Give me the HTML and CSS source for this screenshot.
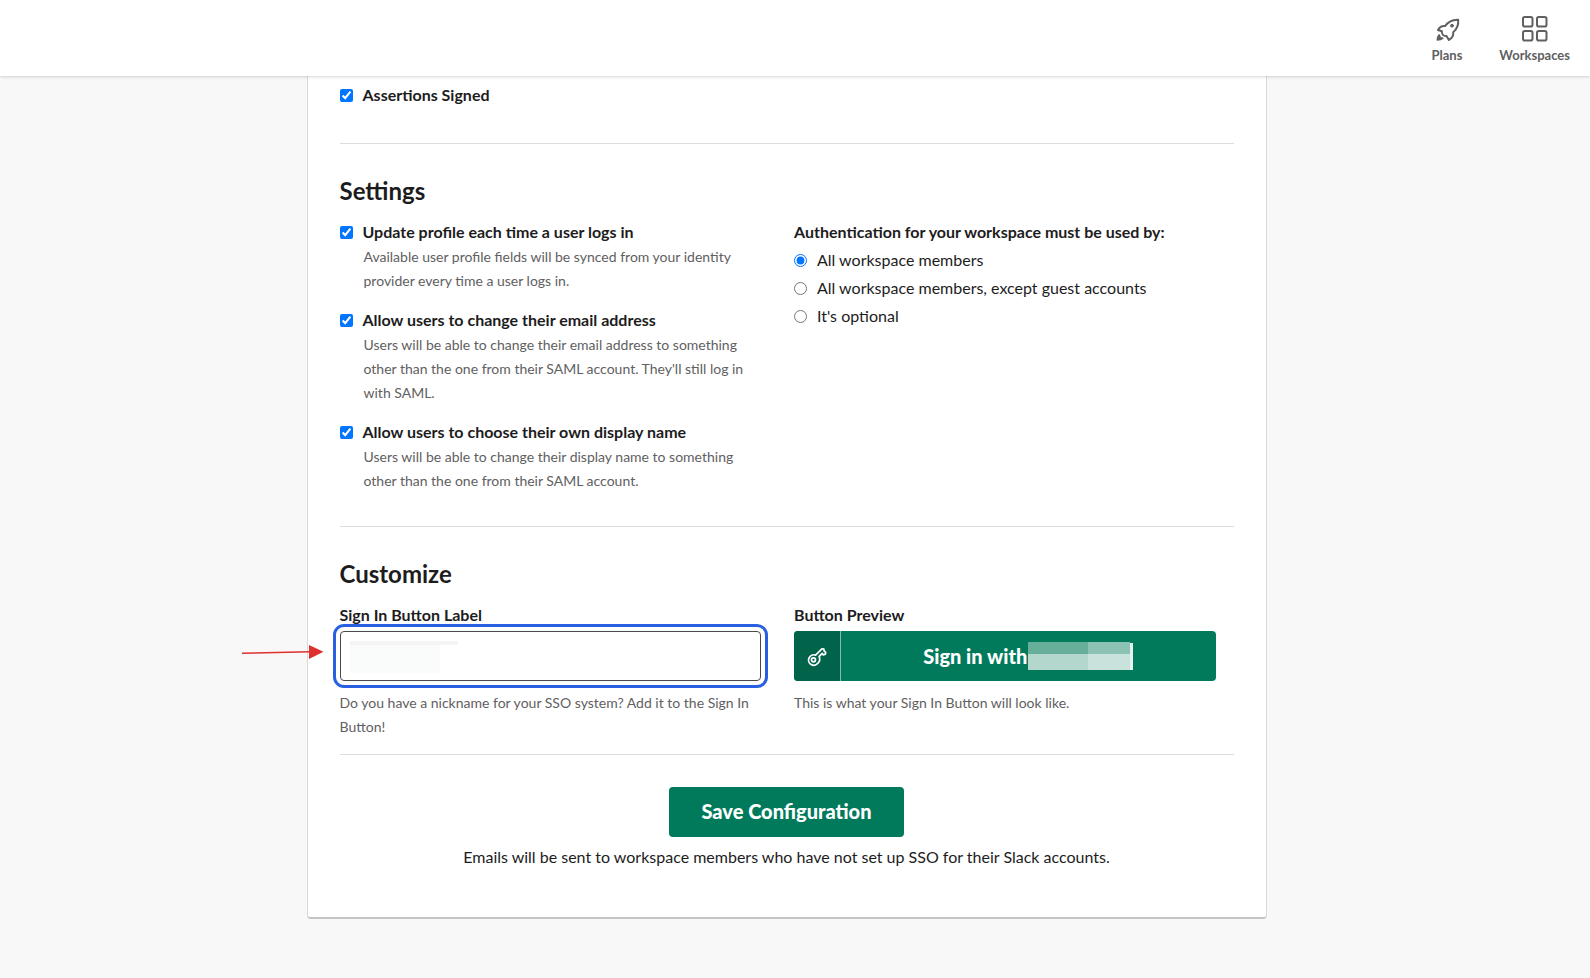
FILE: index.html
```html
<!DOCTYPE html>
<html lang="en">
<head>
<meta charset="utf-8">
<title>SAML Authentication</title>
<link rel="stylesheet" href="styles.css">
</head>
<body>
<header class="topbar">
  <nav class="topnav">
    <a class="navlink" href="#plans">
      <svg class="navicon" viewBox="0 0 28 28" fill="none" stroke="#616061" stroke-width="2" stroke-linejoin="round" stroke-linecap="round">
        <path d="M25.200 4.700c-5.700-.3-9.900 1.800-13.200 6.400-3-.3-5.400 1-7 3.900l3.900 1.300c-.4 1.500 0 2.600 1 3.600s2.200 1.400 3.600 1.100l2.400 4c3.200-2 4.700-4.700 4.300-7.700 3.900-3.200 5.500-7.200 5-12.600z"/>
        <circle cx="19" cy="10.700" r="1.400" fill="#616061" stroke-width="1"/>
        <path d="M6.200 19.800c-1.300 1.400-1.900 3-2 5.300 2.300 0 4.200-.5 5.700-1.900l-2.600-.6z" fill="#616061" stroke-width="1.400"/>
      </svg>
      <span>Plans</span>
    </a>
    <a class="navlink" href="#workspaces">
      <svg class="navicon" viewBox="0 0 28 28" fill="none" stroke="#616061" stroke-width="2">
        <rect x="2" y="2" width="9.500" height="9.500" rx="1.800"/>
        <rect x="16" y="2" width="9.500" height="9.500" rx="1.800"/>
        <rect x="2" y="16" width="9.500" height="9.500" rx="1.800"/>
        <rect x="16" y="16" width="9.500" height="9.500" rx="1.800"/>
      </svg>
      <span>Workspaces</span>
    </a>
  </nav>
</header>
<main class="page">
  <form class="card">
    <div class="option">
      <input class="tick" type="checkbox" id="signed" checked>
      <label class="strong" for="signed">Assertions Signed</label>
    </div>
    <hr class="rule rule-first">
    <section>
      <h2 class="title">Settings</h2>
      <div class="columns">
        <div class="stack">
          <div>
            <div class="option">
              <input class="tick" type="checkbox" id="update" checked>
              <label class="strong" for="update">Update profile each time a user logs in</label>
            </div>
            <p class="note note-indent">Available user profile fields will be synced from your identity provider every time a user logs in.</p>
          </div>
          <div>
            <div class="option">
              <input class="tick" type="checkbox" id="email" checked>
              <label class="strong" for="email">Allow users to change their email address</label>
            </div>
            <p class="note note-indent">Users will be able to change their email address to something other than the one from their SAML account. They'll still log in with SAML.</p>
          </div>
          <div>
            <div class="option">
              <input class="tick" type="checkbox" id="display" checked>
              <label class="strong" for="display">Allow users to choose their own display name</label>
            </div>
            <p class="note note-indent">Users will be able to change their display name to something other than the one from their SAML account.</p>
          </div>
        </div>
        <fieldset class="radios">
          <legend class="strong">Authentication for your workspace must be used by:</legend>
          <div class="option">
            <input class="tick" type="radio" name="auth" id="all" checked>
            <label for="all">All workspace members</label>
          </div>
          <div class="option">
            <input class="tick" type="radio" name="auth" id="except">
            <label for="except">All workspace members, except guest accounts</label>
          </div>
          <div class="option">
            <input class="tick" type="radio" name="auth" id="optional">
            <label for="optional">It's optional</label>
          </div>
        </fieldset>
      </div>
    </section>
    <hr class="rule rule-settings">
    <section>
      <h2 class="title">Customize</h2>
      <div class="columns">
        <div>
          <label class="strong field-label" for="button-label">Sign In Button Label</label>
          <div class="field">
            <input class="textbox" type="text" id="button-label">
            <span class="field-mask"></span>
            <svg class="arrow" viewBox="0 0 82 16">
              <path d="M0 9.300L68 7.700" stroke="#df3030" stroke-width="1.500"/>
              <path d="M67 1l14.500 6.700L67 15z" fill="#df3030"/>
            </svg>
          </div>
          <p class="note field-note">Do you have a nickname for your SSO system? Add it to the Sign In Button!</p>
        </div>
        <div>
          <div class="strong field-label">Button Preview</div>
          <button class="preview" type="button">
            <span class="preview-icon">
              <svg width="22" height="22" viewBox="0 0 22 22" fill="none" stroke="#fff" stroke-width="1.700" stroke-linejoin="round" stroke-linecap="round">
                <path d="M9.600 10.200l6.300-6.300 2 .1.200 2 1.500 1.200-.2 1.900-2.100.8-1.200-1.500-3 3.200c1.100 2.300.7 4.800-1.100 6.500a5.200 5.200 0 1 1-2.400-7.900z"/>
                <circle cx="7.500" cy="14.800" r="2"/>
              </svg>
            </span>
            <span class="preview-text">Sign in with<span class="preview-mask"></span></span>
          </button>
          <p class="note field-note">This is what your Sign In Button will look like.</p>
        </div>
      </div>
    </section>
    <hr class="rule rule-customize">
    <div class="actions">
      <button class="save" type="submit">Save Configuration</button>
      <p class="closing">Emails will be sent to workspace members who have not set up SSO for their Slack accounts.</p>
    </div>
  </form>
</main>
</body>
</html>
```

FILE: styles.css
```css
* {
  box-sizing: border-box;
}

body {
  margin: 0;
  background: #f8f8f8;
  color: #1d1c1d;
  font: 16px/24px Lato, "Open Sans", sans-serif;
}

p,
h2 {
  margin: 0;
}

.topbar {
  position: sticky;
  top: 0;
  z-index: 1;
  padding: 15px 20px 12px;
  background: #fff;
  box-shadow: 0 1px 3px rgba(0, 0, 0, 0.16);
}

.topnav {
  display: flex;
  justify-content: flex-end;
  gap: 37px;
}

.navlink {
  display: flex;
  flex-direction: column;
  align-items: center;
  gap: 3px;
  color: #616061;
  font-size: 13px;
  font-weight: 700;
  line-height: 18px;
  text-decoration: none;
}

.navicon {
  width: 28px;
  height: 28px;
}

.page {
  padding: 0 17px 48px 0;
}

.card {
  max-width: 960px;
  margin: 0 auto;
  padding: 7px 32px 48px;
  background: #fff;
  border: solid #dadada;
  border-width: 0 1px 2px;
  border-bottom-color: #c4c4c4;
  border-radius: 0 0 4px 4px;
}

.option {
  display: flex;
  align-items: center;
  gap: 10px;
}

.tick {
  flex: none;
  width: 13px;
  height: 13px;
  margin: 0;
  accent-color: #0075ff;
}

.strong {
  font-weight: 700;
}

.rule {
  height: 1px;
  margin: 32px 0;
  border: 0;
  background: #ddd;
}

.rule-first {
  margin-top: 36px;
}

.rule-settings {
  margin-top: 33px;
}

.rule-customize {
  margin-top: 15px;
}

.title {
  margin-bottom: 14px;
  font-size: 24px;
  line-height: 30px;
}

.columns {
  display: grid;
  grid-template-columns: 1fr 1fr;
  gap: 33px;
  padding-right: 18px;
}

.stack {
  display: grid;
  gap: 15px;
}

.note {
  color: #616061;
  font-size: 14px;
}

.note-indent {
  margin-top: 1px;
  padding-left: 24px;
}

.radios {
  display: flex;
  flex-direction: column;
  gap: 4px;
  min-width: 0;
  margin: 0;
  padding: 0;
  border: 0;
}

.radios legend {
  margin-bottom: 4px;
  padding: 0;
}

.field-label {
  display: block;
  margin-bottom: 4px;
}

.field {
  position: relative;
}

.textbox {
  display: block;
  width: 100%;
  height: 50px;
  padding: 0 12px;
  border: 1px solid #4a494a;
  border-radius: 4px;
  background: #fff;
  font: inherit;
  outline: 3px solid #2860e1;
  outline-offset: 4px;
}

.field-mask {
  position: absolute;
  top: 10px;
  left: 10px;
  width: 108px;
  height: 32px;
  border-top: 4px solid #f5f4f5;
  background: linear-gradient(90deg, #fafcfb 90px, #fff 90px);
}

.arrow {
  position: absolute;
  top: 13px;
  left: -98px;
  width: 82px;
  height: 16px;
}

.field-note {
  margin-top: 10px;
}

.preview {
  display: flex;
  width: 100%;
  height: 50px;
  padding: 0;
  overflow: hidden;
  border: 0;
  border-radius: 4px;
  background: #007a5a;
  color: #fff;
  font: 900 20px/28px Lato, sans-serif;
}

.preview-icon {
  display: flex;
  align-items: center;
  justify-content: center;
  width: 47px;
  height: 100%;
  border-right: 1px solid #80bdad;
  background: #00634a;
}

.preview-text {
  display: flex;
  flex: 1;
  align-items: center;
  justify-content: center;
  height: 100%;
}

.preview-mask {
  width: 105px;
  height: 28px;
  margin-left: 1px;
  background:
    linear-gradient(#e5f1ee, #e5f1ee) right bottom / 3px 27px no-repeat,
    linear-gradient(90deg, #67af9b 60px, #8cc2b3 60px) left top / 102px 12px no-repeat,
    linear-gradient(90deg, #b4d7cd 60px, #c9e2dc 60px) left bottom / 102px 16px no-repeat;
}

.actions {
  display: flex;
  flex-direction: column;
  align-items: center;
  gap: 8px;
  text-align: center;
}

.save {
  height: 50px;
  padding: 0 32px 3px;
  border: 0;
  border-radius: 4px;
  background: #007a5a;
  color: #fff;
  font: 900 20px/28px Lato, sans-serif;
}
```
